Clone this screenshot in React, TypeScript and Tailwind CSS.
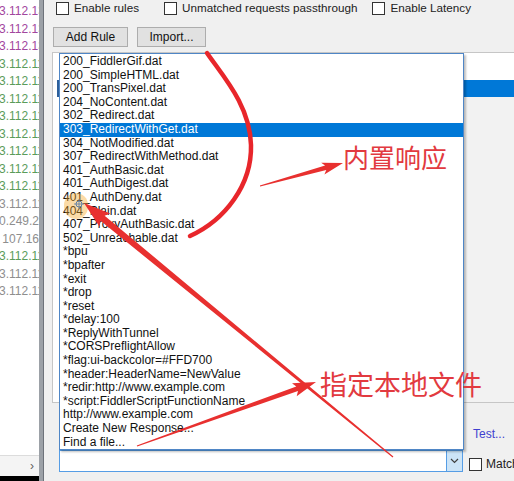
import React from "react";

type Tone = "p" | "g" | "s";

const sessions: [string, Tone][] = [
  ["3.112.13", "p"],
  ["3.112.13", "p"],
  ["3.112.13", "p"],
  ["3.112.11", "g"],
  ["3.112.11", "g"],
  ["3.112.11", "g"],
  ["3.112.11", "g"],
  ["3.112.11", "g"],
  ["3.112.11", "g"],
  ["3.112.11", "g"],
  ["3.112.11", "g"],
  ["3.112.11", "s"],
  ["0.249.24", "s"],
  ["\u00a0107.168", "s"],
  ["3.112.11", "g"],
  ["3.112.11", "s"],
  ["3.112.11", "s"],
];

const toneClass: Record<Tone, string> = {
  p: "text-[#a2469e]",
  g: "text-[#5a9c5a]",
  s: "text-[#8e8e8e]",
};

const responses = [
  "200_FiddlerGif.dat",
  "200_SimpleHTML.dat",
  "200_TransPixel.dat",
  "204_NoContent.dat",
  "302_Redirect.dat",
  "303_RedirectWithGet.dat",
  "304_NotModified.dat",
  "307_RedirectWithMethod.dat",
  "401_AuthBasic.dat",
  "401_AuthDigest.dat",
  "401_AuthDeny.dat",
  "404_Plain.dat",
  "407_ProxyAuthBasic.dat",
  "502_Unreachable.dat",
  "*bpu",
  "*bpafter",
  "*exit",
  "*drop",
  "*reset",
  "*delay:100",
  "*ReplyWithTunnel",
  "*CORSPreflightAllow",
  "*flag:ui-backcolor=#FFD700",
  "*header:HeaderName=NewValue",
  "*redir:http://www.example.com",
  "*script:FiddlerScriptFunctionName",
  "http://www.example.com",
  "Create New Response...",
  "Find a file...",
];

function Box() {
  return <span className="inline-block w-[13px] h-[13px] border border-[#333333] bg-white shrink-0" />;
}

// tapered hand-drawn arrow, thin at the tail and fat near the head
function arrow(tail: [number, number], tip: [number, number], wTail: number, wHead: number, headLen: number, headHalf: number) {
  const dx = tip[0] - tail[0];
  const dy = tip[1] - tail[1];
  const len = Math.hypot(dx, dy);
  const ux = dx / len;
  const uy = dy / len;
  const nx = -uy;
  const ny = ux;
  const bx = tip[0] - ux * headLen;
  const by = tip[1] - uy * headLen;
  const pts = [
    [tail[0] + (nx * wTail) / 2, tail[1] + (ny * wTail) / 2],
    [bx + (nx * wHead) / 2, by + (ny * wHead) / 2],
    [bx - ux * 3 + nx * headHalf, by - uy * 3 + ny * headHalf],
    [tip[0], tip[1]],
    [bx - ux * 3 - nx * headHalf, by - uy * 3 - ny * headHalf],
    [bx - (nx * wHead) / 2, by - (ny * wHead) / 2],
    [tail[0] - (nx * wTail) / 2, tail[1] - (ny * wTail) / 2],
  ];
  return pts.map((p) => `${p[0].toFixed(1)},${p[1].toFixed(1)}`).join(" ");
}

export default function App() {
  const selected = 5;
  return (
    <div className="relative w-[514px] h-[481px] overflow-hidden flex bg-[#f0f0f0] font-['Liberation_Sans',sans-serif] text-[12px] text-[#111111]">
      {/* session list on the left */}
      <div className="w-[39px] shrink-0 h-full flex flex-col bg-white overflow-hidden">
        <div className="flex-1 pt-[3px]">
          {sessions.map(([ip, tone], i) => (
            <div key={i} className={`h-[17.5px] leading-[17.5px] whitespace-nowrap -ml-[1px] ${toneClass[tone]}`}>
              {ip}
            </div>
          ))}
        </div>
        <div className="h-[21px] border-t border-[#dcdcdc] bg-[#f4f4f4] flex items-center justify-end pr-[5px] text-[#606060] text-[12px]">
          ›
        </div>
        <div className="h-[5px] bg-black" />
      </div>
      <div className="w-[5px] shrink-0 h-full bg-[#9ca1a7] border-r border-[#6d727a]" />

      {/* rules panel */}
      <div className="flex-1 min-w-0 flex flex-col">
        <div className="h-[15px] pt-[1px] flex items-center text-[11.7px] text-[#222222] whitespace-nowrap">
          <div className="ml-[12px] flex items-center gap-[5px]">
            <Box />
            <span>Enable rules</span>
          </div>
          <div className="ml-[25px] flex items-center gap-[5px]">
            <Box />
            <span>Unmatched requests passthrough</span>
          </div>
          <div className="ml-[15px] flex items-center gap-[5px]">
            <Box />
            <span>Enable Latency</span>
          </div>
        </div>
        <div className="mt-[12px] h-[20px] flex">
          <div className="ml-[9px] w-[75px] h-full bg-[#e1e1e1] border border-[#adadad] flex items-center justify-center">Add Rule</div>
          <div className="ml-[9px] w-[69px] h-full bg-[#e1e1e1] border border-[#adadad] flex items-center justify-center">Import...</div>
        </div>
        <div className="mt-[5px] ml-[8px] h-[351px] border-t border-l border-b border-[#c6c6c6] flex flex-col">
          <div className="h-[27px] bg-white" />
          <div className="h-[17px] flex">
            <div className="w-[4px] bg-white" />
            <div className="w-[2px] bg-[#2d5f9a]" />
            <div className="w-[405px] bg-white" />
            <div className="flex-1 bg-[#0078d7]" />
          </div>
          <div className="flex-1 flex">
            <div className="w-[411px] bg-white" />
            <div className="flex-1 bg-[#f2f2f2]" />
          </div>
        </div>
        <div className="flex-1 flex">
          <div className="ml-[15px] w-[404px] shrink-0 flex flex-col justify-end pb-[9px]">
            <div className="h-[22px] bg-white border border-[#569de5] flex justify-end">
              <div className="w-[16px] h-full bg-[#cce4f7] border-l border-[#569de5] flex items-center justify-center">
                <svg width="9" height="6" viewBox="0 0 9 6">
                  <path d="M1 1 L4.5 4.5 L8 1" fill="none" stroke="#404040" strokeWidth="1.2" />
                </svg>
              </div>
            </div>
          </div>
          <div className="ml-[6px] flex flex-col whitespace-nowrap">
            <div className="mt-[25px] ml-[4px] text-[#3f3fcf] leading-none">Test...</div>
            <div className="mt-[15px] flex items-center gap-[4px]">
              <Box />
              <span className="text-[#222222]">Match</span>
            </div>
          </div>
        </div>
      </div>

      {/* open dropdown list */}
      <div className="absolute left-[59px] top-[53px] w-[405px] bg-white border border-[#4f86c6] pt-[1px] shadow-[2px_2px_2px_rgba(0,0,0,0.25)]">
        {responses.map((r, i) => (
          <div
            key={r}
            className={`h-[13.6px] leading-[13.6px] pl-[3px] whitespace-nowrap ${i === selected ? "bg-[#0078d7] text-white" : ""}`}
          >
            {r}
          </div>
        ))}
      </div>

      {/* screen recording cursor highlight */}
      <div className="absolute left-[64px] top-[193px] w-[24px] h-[26px] rounded-full bg-[#f5a623]/40" />

      {/* annotations */}
      <svg className="absolute inset-0 pointer-events-none" width="514" height="481" viewBox="0 0 514 481">
        <circle cx="79" cy="204" r="3" fill="none" stroke="#5a7fa8" strokeWidth="1" />
        <path d="M79 199 V209 M74 204 H84" stroke="#5a7fa8" strokeWidth="0.8" />
        <path
          d="M207 53 C222 75 250 105 251 145 C252 185 225 220 190 236"
          fill="none"
          stroke="#e8262b"
          strokeWidth="4.5"
          strokeLinecap="round"
        />
        <polygon points={arrow([260, 186], [343, 163], 1, 4.5, 18, 6)} fill="#e8302f" />
        <polygon points={arrow([393, 457], [84, 203], 1.2, 6.5, 24, 8.5)} fill="#e8302f" />
        <polygon points={arrow([137, 446], [316, 382], 1, 5, 20, 7)} fill="#e8302f" />
      </svg>
      <div className="absolute left-[343px] top-[144px] text-[26px] leading-none text-[#e23a40] font-['Noto_Sans_CJK_SC',sans-serif]">
        内置响应
      </div>
      <div className="absolute left-[320px] top-[370px] text-[27px] leading-none text-[#e23a40] font-['Noto_Sans_CJK_SC',sans-serif]">
        指定本地文件
      </div>
    </div>
  );
}
